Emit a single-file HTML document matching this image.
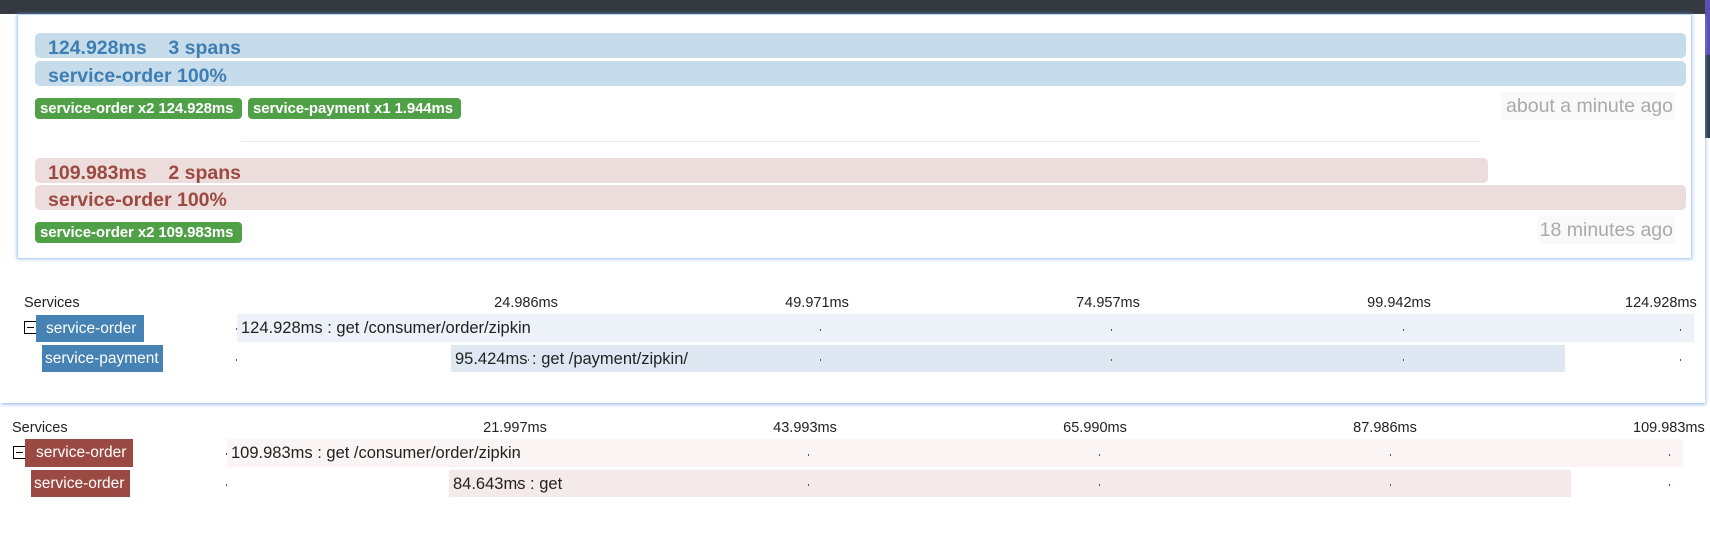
<!DOCTYPE html>
<html><head><meta charset="utf-8"><style>
*{box-sizing:border-box;margin:0;padding:0}
body{width:1710px;height:533px;overflow:hidden;background:#fff;position:relative;font-family:"Liberation Sans",sans-serif}
.a{position:absolute}
.bar{position:absolute;border-radius:5px;font-weight:bold;font-size:19.5px;line-height:27px;padding-left:13px;padding-top:2px;white-space:pre}
.blue{background:#c6dcea;color:#3f7eb3}
.red{background:#eddcdc;color:#9b4a40}
.badge{position:absolute;background:#50a048;color:#fff;font-weight:bold;font-size:15px;line-height:21px;border-radius:4px;padding:0 5px;white-space:nowrap;letter-spacing:-0.1px;overflow:hidden}
.time{position:absolute;background:#f9f9f9;color:#aaa;font-size:19.5px;line-height:28px;text-align:right;padding-right:2px;white-space:nowrap}
.t{position:absolute;font-size:14.5px;color:#222;white-space:nowrap}
.lbl{position:absolute;font-size:14.5px;color:#222;transform:translateX(-50%);white-space:nowrap}
.row{position:absolute;font-size:16.5px;line-height:28px;color:#222;white-space:nowrap;padding-left:4px}
.svc{position:absolute;color:#fff;font-size:15.5px;line-height:27px;white-space:nowrap}
.dot{position:absolute;width:1px;height:2px;background:#555}
.box{position:absolute;width:13px;height:13px;border:1.5px solid #000;background:#fff}
.box:after{content:"";position:absolute;left:2px;right:2px;top:4.5px;height:1.5px;background:#000}
</style></head><body>
<div class="a" style="left:0;top:0;width:1705px;height:14px;background:#343a40"></div>
<div class="a" style="left:1705px;top:0;width:5px;height:55px;background:#5b4fb3"></div>
<div class="a" style="left:1705px;top:55px;width:5px;height:83px;background:#2e3e52"></div>
<div class="a" style="left:0;top:14px;width:1705px;height:389px;background:#fff;box-shadow:1px 2px 3px rgba(120,160,230,.6)"></div>
<div class="a" style="left:17px;top:14px;width:1675px;height:245px;background:#fff;border:1px solid #bcd6f5;box-shadow:0 0 4px rgba(120,170,240,.7)"></div>
<div class="bar blue" style="left:35px;top:33px;width:1651px;height:25px">124.928ms    3 spans</div>
<div class="bar blue" style="left:35px;top:61px;width:1651px;height:25px">service-order 100%</div>
<div class="badge" style="left:35px;top:98px;width:207px">service-order x2 124.928ms</div>
<div class="badge" style="left:248px;top:98px;width:213px">service-payment x1 1.944ms</div>
<div class="time" style="left:1501px;top:92px;width:174px">about a minute ago</div>
<div class="a" style="left:241px;top:141px;width:1239px;height:1px;background:#e8e8e8"></div>
<div class="bar red" style="left:35px;top:158px;width:1453px;height:25px">109.983ms    2 spans</div>
<div class="bar red" style="left:35px;top:185px;width:1651px;height:25px">service-order 100%</div>
<div class="badge" style="left:35px;top:222px;width:207px">service-order x2 109.983ms</div>
<div class="time" style="left:1538px;top:216px;width:137px">18 minutes ago</div>

<div class="t" style="left:24px;top:295px">Services</div>
<div class="lbl" style="left:526px;top:295px">24.986ms</div>
<div class="lbl" style="left:817px;top:295px">49.971ms</div>
<div class="lbl" style="left:1108px;top:295px">74.957ms</div>
<div class="lbl" style="left:1399px;top:295px">99.942ms</div>
<div class="t" style="left:1625px;top:295px">124.928ms</div>
<div class="box" style="left:24px;top:321px"></div>
<div class="svc" style="left:36px;top:315px;width:108px;height:27px;background:#4682b4;padding-left:10px">service-order</div>
<div class="svc" style="left:42px;top:345px;width:121px;height:27px;background:#4682b4;padding-left:3px">service-payment</div>
<div class="row" style="left:237px;top:314px;width:1457px;height:28px;background:#edf2f8">124.928ms : get /consumer/order/zipkin</div>
<div class="row" style="left:451px;top:345px;width:1114px;height:27px;background:#dfe8f2">95.424ms : get /payment/zipkin/</div>
<div class="dot" style="left:236px;top:328px"></div><div class="dot" style="left:528px;top:329px"></div><div class="dot" style="left:820px;top:329px"></div><div class="dot" style="left:1111px;top:329px"></div><div class="dot" style="left:1403px;top:329px"></div><div class="dot" style="left:1680px;top:329px"></div>
<div class="dot" style="left:236px;top:359px"></div><div class="dot" style="left:528px;top:359px"></div><div class="dot" style="left:820px;top:359px"></div><div class="dot" style="left:1111px;top:359px"></div><div class="dot" style="left:1403px;top:359px"></div><div class="dot" style="left:1680px;top:359px"></div>

<div class="t" style="left:12px;top:420px">Services</div>
<div class="lbl" style="left:515px;top:420px">21.997ms</div>
<div class="lbl" style="left:805px;top:420px">43.993ms</div>
<div class="lbl" style="left:1095px;top:420px">65.990ms</div>
<div class="lbl" style="left:1385px;top:420px">87.986ms</div>
<div class="t" style="left:1633px;top:420px">109.983ms</div>
<div class="box" style="left:13px;top:446px"></div>
<div class="svc" style="left:25px;top:439px;width:108px;height:28px;background:#9a4a43;padding-left:11px">service-order</div>
<div class="svc" style="left:31px;top:470px;width:99px;height:27px;background:#9a4a43;padding-left:3px">service-order</div>
<div class="row" style="left:227px;top:439px;width:1456px;height:28px;background:#faf4f4">109.983ms : get /consumer/order/zipkin</div>
<div class="row" style="left:449px;top:470px;width:1122px;height:27px;background:#f5eaea">84.643ms : get</div>
<div class="dot" style="left:226px;top:453px"></div><div class="dot" style="left:517px;top:454px"></div><div class="dot" style="left:808px;top:454px"></div><div class="dot" style="left:1099px;top:454px"></div><div class="dot" style="left:1390px;top:454px"></div><div class="dot" style="left:1669px;top:454px;background:#8a3030"></div>
<div class="dot" style="left:226px;top:484px"></div><div class="dot" style="left:517px;top:484px"></div><div class="dot" style="left:808px;top:484px"></div><div class="dot" style="left:1099px;top:484px"></div><div class="dot" style="left:1390px;top:484px"></div><div class="dot" style="left:1669px;top:484px;background:#8a3030"></div>
</body></html>
